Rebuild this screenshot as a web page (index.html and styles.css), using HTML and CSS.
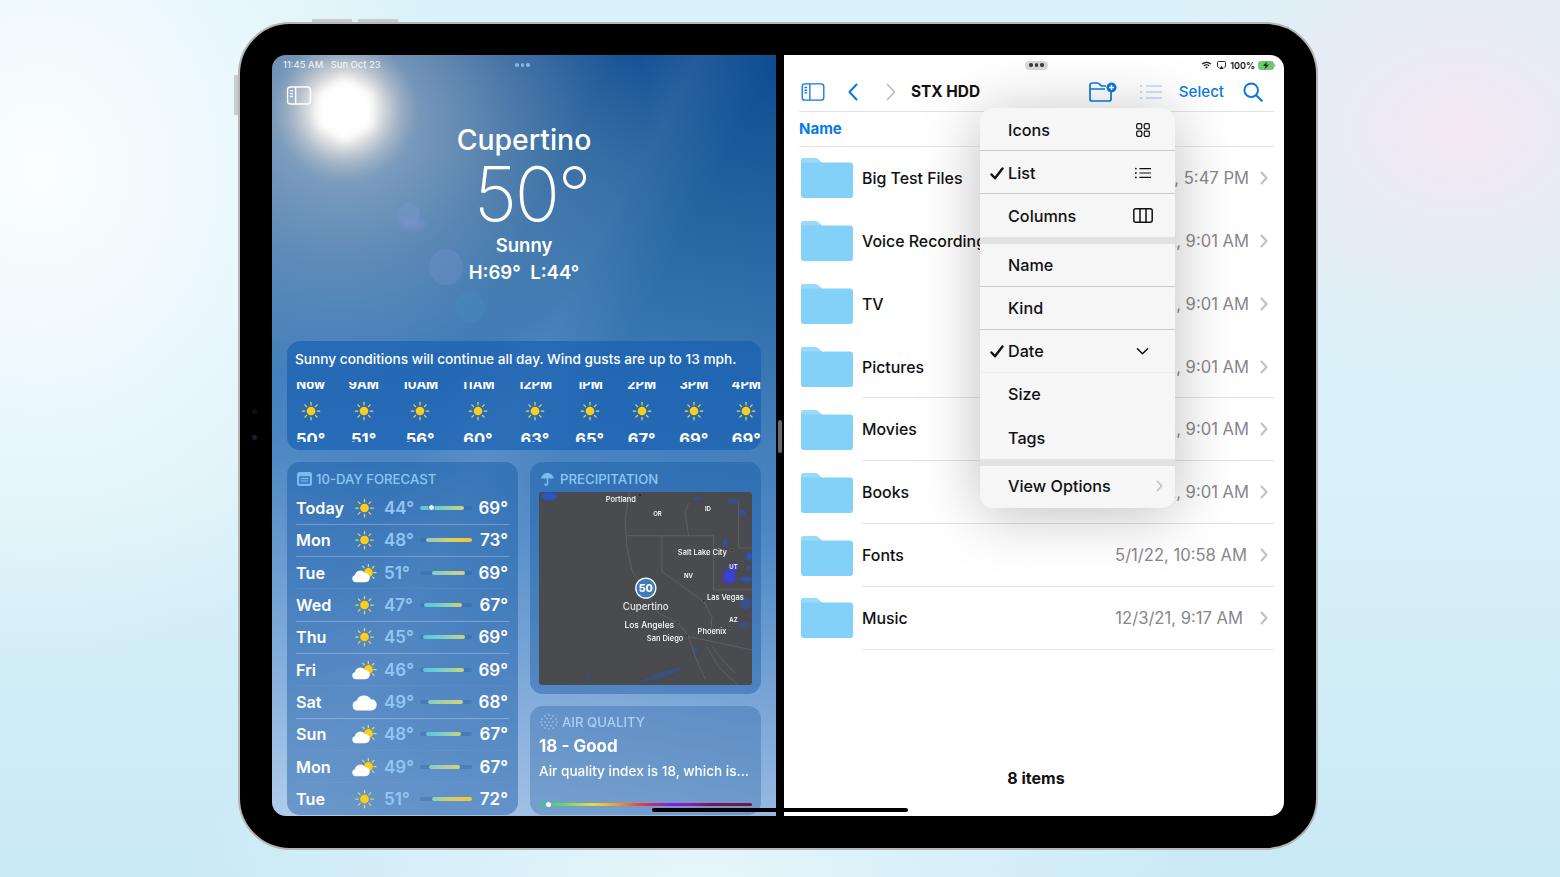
FILE: index.html
```html
<!DOCTYPE html>
<html lang="en">
<head>
<meta charset="utf-8">
<title>Split View</title>
<link rel="stylesheet" href="styles.css">
</head>
<body>
<svg class="defs" aria-hidden="true">
  <symbol id="sun" viewBox="0 0 24 24">
    <g stroke="#e9d84f" stroke-width="1.5" stroke-linecap="round">
      <path d="M12 1.5v3M12 19.5v3M1.5 12h3M19.5 12h3M4.6 4.6l2.1 2.1M17.3 17.3l2.1 2.1M4.6 19.4l2.1-2.1M17.3 6.7l2.1-2.1"/>
    </g>
    <circle cx="12" cy="12" r="5.2" fill="#fdcf16"/>
  </symbol>
  <symbol id="cloudsun" viewBox="0 0 26 20">
    <g stroke="#e9d84f" stroke-width="1.3" stroke-linecap="round">
      <path d="M17 1v2.4M25 9.5h-2.4M11.2 3l1.5 1.7M22.8 3.2l-1.6 1.6M22.8 15.6l-1.6-1.6"/>
    </g>
    <circle cx="17" cy="9.5" r="4.6" fill="#fdcf16"/>
    <path d="M4 19.5a3.7 3.7 0 0 1-.9-7.3A5.7 5.7 0 0 1 13.5 10a4.8 4.8 0 0 1 5 4.9c0 2.700-2 4.600-4.600 4.600z" fill="#fff"/>
  </symbol>
  <symbol id="cloud" viewBox="0 0 22 16">
    <path d="M5 15.500a4.300 4.300 0 0 1-1-8.500A7 7 0 0 1 16.500 5.500 5 5 0 0 1 17 15.500z" fill="#fff"/>
  </symbol>
  <symbol id="folder" viewBox="0 0 52 40">
    <path d="M0 3a3 3 0 0 1 3-3h10c3 0 4 1 6 3l2 1.500h28a3 3 0 0 1 3 3V37a3 3 0 0 1-3 3H3a3 3 0 0 1-3-3z" fill="#83d1f9"/>
    <path d="M0 3a3 3 0 0 1 3-3h10c3 0 4 1 6 3l2 1.500H0z" fill="#9adaf9"/>
  </symbol>
  <symbol id="sidebar" viewBox="0 0 26 20">
    <rect x="1" y="1" width="24" height="18" rx="3" fill="none" stroke="currentColor" stroke-width="1.500"/>
    <path d="M9.500 1v18" stroke="currentColor" stroke-width="1.500"/>
    <path d="M3.500 5h3M3.500 8h3M3.500 11h3" stroke="currentColor" stroke-width="1.500"/>
  </symbol>
  <symbol id="chev" viewBox="0 0 8 14">
    <path d="M1.500 1.500 6.500 7l-5 5.500" fill="none" stroke="currentColor" stroke-width="2" stroke-linecap="round" stroke-linejoin="round"/>
  </symbol>
  <symbol id="check" viewBox="0 0 14 13">
    <path d="M1.500 7.500 5 11.300 12.500 1.500" fill="none" stroke="#111" stroke-width="2.400" stroke-linecap="round" stroke-linejoin="round"/>
  </symbol>
</svg>

<main class="device">
  <span class="hw hw-top-a"></span>
  <span class="hw hw-top-b"></span>
  <span class="hw hw-left"></span>
  <span class="cam cam-a"></span>
  <span class="cam cam-b"></span>

  <div class="screen">
    <section class="weather">
      <span class="flare flare-sun"></span>
      <span class="flare flare-streak"></span>
      <span class="flare flare-a"></span>
      <span class="flare flare-b"></span>
      <span class="flare flare-c"></span>

      <div class="w-status">
        <span>11:45 AM&nbsp;&nbsp;&nbsp;Sun Oct 23</span>
        <span class="w-dots"><i></i><i></i><i></i></span>
      </div>
      <div class="w-toolbar"><svg class="w-side"><use href="#sidebar"/></svg></div>

      <header class="hero">
        <h1 class="city">Cupertino</h1>
        <div class="temp">50°</div>
        <div class="cond">Sunny</div>
        <div class="hilo">H:69°&nbsp;&nbsp;L:44°</div>
      </header>

      <section class="card hourly">
        <p class="summary">Sunny conditions will continue all day. Wind gusts are up to 13 mph.</p>
        <div class="hours">
          <div class="hour"><b>Now</b><svg><use href="#sun"/></svg><b class="ht">50°</b></div>
          <div class="hour"><b>9AM</b><svg><use href="#sun"/></svg><b class="ht">51°</b></div>
          <div class="hour"><b>10AM</b><svg><use href="#sun"/></svg><b class="ht">56°</b></div>
          <div class="hour"><b>11AM</b><svg><use href="#sun"/></svg><b class="ht">60°</b></div>
          <div class="hour"><b>12PM</b><svg><use href="#sun"/></svg><b class="ht">63°</b></div>
          <div class="hour"><b>1PM</b><svg><use href="#sun"/></svg><b class="ht">65°</b></div>
          <div class="hour"><b>2PM</b><svg><use href="#sun"/></svg><b class="ht">67°</b></div>
          <div class="hour"><b>3PM</b><svg><use href="#sun"/></svg><b class="ht">69°</b></div>
          <div class="hour"><b>4PM</b><svg><use href="#sun"/></svg><b class="ht">69°</b></div>
        </div>
      </section>

      <div class="cards">
        <section class="card forecast">
          <h2 class="card-head">
            <svg class="head-ico" viewBox="0 0 15 14"><rect width="15" height="14" rx="2.500" fill="#7db9f0"/><rect x="2" y="4" width="11" height="8" rx="1" fill="#3f83c6"/><path d="M4 6.500h7M4 9h7" stroke="#7db9f0"/></svg>
            10-DAY FORECAST
          </h2>
          <div class="day"><span class="d-name">Today</span><svg class="d-ico"><use href="#sun"/></svg><span class="d-lo">44°</span><span class="track"><i class="fill fill-cool" style="margin-left:0;width:44px"></i><i class="now-dot"></i></span><span class="d-hi">69°</span></div>
          <div class="day"><span class="d-name">Mon</span><svg class="d-ico"><use href="#sun"/></svg><span class="d-lo">48°</span><span class="track"><i class="fill fill-warm" style="margin-left:6px;width:46px"></i></span><span class="d-hi">73°</span></div>
          <div class="day day-faint"><span class="d-name">Tue</span><svg class="d-ico"><use href="#cloudsun"/></svg><span class="d-lo">51°</span><span class="track"><i class="fill fill-mid" style="margin-left:12px;width:33px"></i></span><span class="d-hi">69°</span></div>
          <div class="day"><span class="d-name">Wed</span><svg class="d-ico"><use href="#sun"/></svg><span class="d-lo">47°</span><span class="track"><i class="fill fill-cool" style="margin-left:4px;width:38px"></i></span><span class="d-hi">67°</span></div>
          <div class="day"><span class="d-name">Thu</span><svg class="d-ico"><use href="#sun"/></svg><span class="d-lo">45°</span><span class="track"><i class="fill fill-cool" style="margin-left:3px;width:42px"></i></span><span class="d-hi">69°</span></div>
          <div class="day day-faint"><span class="d-name">Fri</span><svg class="d-ico"><use href="#cloudsun"/></svg><span class="d-lo">46°</span><span class="track"><i class="fill fill-cool" style="margin-left:3px;width:41px"></i></span><span class="d-hi">69°</span></div>
          <div class="day"><span class="d-name">Sat</span><svg class="d-ico"><use href="#cloud"/></svg><span class="d-lo">49°</span><span class="track"><i class="fill fill-mid" style="margin-left:8px;width:35px"></i></span><span class="d-hi">68°</span></div>
          <div class="day day-faint"><span class="d-name">Sun</span><svg class="d-ico"><use href="#cloudsun"/></svg><span class="d-lo">48°</span><span class="track"><i class="fill fill-cool" style="margin-left:6px;width:35px"></i></span><span class="d-hi">67°</span></div>
          <div class="day day-faint"><span class="d-name">Mon</span><svg class="d-ico"><use href="#cloudsun"/></svg><span class="d-lo">49°</span><span class="track"><i class="fill fill-mid" style="margin-left:9px;width:31px"></i></span><span class="d-hi">67°</span></div>
          <div class="day"><span class="d-name">Tue</span><svg class="d-ico"><use href="#sun"/></svg><span class="d-lo">51°</span><span class="track"><i class="fill fill-warm" style="margin-left:12px;width:40px"></i></span><span class="d-hi">72°</span></div>
        </section>

        <div class="side-cards">
          <section class="card precip">
            <h2 class="card-head">
              <svg class="head-ico" viewBox="0 0 15 16"><path d="M7.500 1C3.500 1 .8 3.800.3 8c1.300-1 2.400-1 3.500 0 1.100-1 2.400-1 3.700 0 1.300-1 2.600-1 3.700 0 1.100-1 2.200-1 3.500 0C14.200 3.800 11.500 1 7.500 1z" fill="#7db9f0"/><path d="M7.500 7v6.500c0 2-2.500 2-2.800.3" fill="none" stroke="#7db9f0" stroke-width="1.800" stroke-linecap="round"/></svg>
              PRECIPITATION
            </h2>
            <svg class="map" viewBox="42 97 638 578">
              <defs><filter id="soft"><feGaussianBlur stdDeviation="3"/></filter></defs>
              <rect x="42" y="97" width="638" height="578" fill="#4a4b4e"/>
              <g fill="#2a55cc" filter="url(#soft)">
                <ellipse cx="72" cy="110" rx="24" ry="12"/>
                <ellipse cx="612" cy="350" rx="20" ry="22" fill="#3c3fd0"/>
                <ellipse cx="625" cy="322" rx="10" ry="12" fill="#3c3fd0"/>
                <ellipse cx="600" cy="250" rx="6" ry="12" opacity=".7"/>
                <ellipse cx="672" cy="290" rx="9" ry="11"/>
                <ellipse cx="662" cy="358" rx="18" ry="7"/>
                <ellipse cx="670" cy="325" rx="8" ry="7" opacity=".7"/>
                <ellipse cx="660" cy="430" rx="18" ry="20" opacity=".45"/>
                <ellipse cx="655" cy="495" rx="20" ry="10" opacity=".35"/>
                <ellipse cx="625" cy="125" rx="22" ry="8" opacity=".4"/>
                <ellipse cx="650" cy="160" rx="14" ry="10" opacity=".45"/>
                <ellipse cx="515" cy="115" rx="12" ry="6" opacity=".4"/>
                <ellipse cx="410" cy="645" rx="65" ry="6" opacity=".5" transform="rotate(-18 410 645)"/>
                <ellipse cx="190" cy="652" rx="7" ry="5" opacity=".4"/>
                <ellipse cx="510" cy="572" rx="8" ry="12" opacity=".4"/>
              </g>
              <g class="map-lines">
                <path d="M312 97 300 180l5 80 15 70 30 50 50 80 60 30 30 40 20 60 30 68"/>
                <path d="M305 228H565M410 228V335L535 425l25 45-5 60M565 228V390H680M490 130l-10 30 10 68M640 130V265H680M490 530 680 570"/>
                <path d="M545 560l35 60 30 30 30 25M560 560l40 50 30 30"/>
              </g>
              <g class="map-label">
                <text x="242" y="126">Portland</text>
                <text x="384" y="170" class="tiny">OR</text>
                <text x="539" y="154" class="tiny">ID</text>
                <text x="458" y="287">Salt Lake City</text>
                <text x="612" y="327" class="tiny">UT</text>
                <text x="476" y="354" class="tiny">NV</text>
                <text x="545" y="419">Las Vegas</text>
                <text x="612" y="486" class="tiny">AZ</text>
                <text x="517" y="521">Phoenix</text>
                <text x="293" y="451" class="big">Cupertino</text>
                <text x="298" y="505" class="mid">Los Angeles</text>
                <text x="365" y="544">San Diego</text>
              </g>
              <circle cx="345" cy="106" r="3" fill="#222"/>
              <circle cx="458" cy="487" r="4" fill="#222" stroke="#aaa"/>
              <circle cx="486" cy="527" r="4" fill="#222" stroke="#aaa"/>
              <circle cx="536" cy="423" r="4" fill="#222" stroke="#aaa"/>
              <circle cx="614" cy="505" r="4" fill="#222" stroke="#aaa"/>
              <circle cx="620" cy="272" r="4" fill="#222" stroke="#aaa"/>
              <circle cx="362" cy="385" r="30" fill="#3f7cb8" stroke="#fff" stroke-width="4"/>
              <text x="362" y="397" class="pin">50</text>
            </svg>
          </section>

          <section class="card air">
            <h2 class="card-head air-head">
              <svg class="head-ico air-ico" viewBox="0 0 18 16"><g fill="#a9cff2"><circle cx="9" cy="1" r=".8"/><circle cx="5" cy="2" r=".8"/><circle cx="13" cy="2" r=".8"/><circle cx="2" cy="5" r=".8"/><circle cx="7" cy="4.500" r=".8"/><circle cx="11" cy="4.500" r=".8"/><circle cx="16" cy="5" r=".8"/><circle cx="1" cy="8" r=".8"/><circle cx="5" cy="8" r=".8"/><circle cx="9" cy="8" r=".8"/><circle cx="13" cy="8" r=".8"/><circle cx="17" cy="8" r=".8"/><circle cx="2" cy="11" r=".8"/><circle cx="7" cy="11.500" r=".8"/><circle cx="11" cy="11.500" r=".8"/><circle cx="16" cy="11" r=".8"/><circle cx="5" cy="14" r=".8"/><circle cx="9" cy="15" r=".8"/><circle cx="13" cy="14" r=".8"/></g></svg>
              AIR QUALITY
            </h2>
            <div class="air-val">18 - Good</div>
            <p class="air-desc">Air quality index is 18, which is...</p>
            <div class="air-bar"><i></i></div>
          </section>
        </div>
      </div>
    </section>

    <div class="divider"><span class="handle"></span></div>

    <section class="files">
      <div class="f-status">
        <span class="f-dots"><i></i><i></i><i></i></span>
        <span class="f-indicators">
          <svg class="wifi" viewBox="0 0 12 9"><path d="M.5 3a8 8 0 0 1 11 0L10.500 4a6.500 6.500 0 0 0-9 0zM2.500 5a5 5 0 0 1 7 0l-1 1a3.500 3.500 0 0 0-5 0zM4.500 7a2 2 0 0 1 3 0L6 8.700z" fill="#111"/></svg>
          <svg class="cast" viewBox="0 0 10 9"><path d="M2.500 7H1.500a1 1 0 0 1-1-1V1.500a1 1 0 0 1 1-1h7a1 1 0 0 1 1 1V6a1 1 0 0 1-1 1h-1" fill="none" stroke="#111"/><path d="M5 5.500 7.500 9h-5z" fill="#111"/></svg>
          <span class="pct">100%</span>
          <svg class="batt" viewBox="0 0 18 9"><rect x=".5" y=".5" width="15" height="8" rx="2" fill="#5ed35f" stroke="#8a8a8a" stroke-width=".6"/><path d="M16.500 3v3c.6 0 1-.6 1-1.500s-.4-1.500-1-1.500z" fill="#888"/><path d="M9.500 0 4.500 5h3L6 9l5.500-5.500h-3z" fill="#111" stroke="#5ed35f" stroke-width=".5"/></svg>
        </span>
      </div>

      <nav class="f-toolbar">
        <svg class="t-side"><use href="#sidebar"/></svg>
        <svg class="t-back" viewBox="0 0 10 18"><path d="M8.500 1.500 1.500 9l7 7.500" fill="none" stroke="currentColor" stroke-width="2" stroke-linecap="round" stroke-linejoin="round"/></svg>
        <svg class="t-fwd" viewBox="0 0 10 18"><path d="M1.500 1.500 8.500 9l-7 7.500" fill="none" stroke="currentColor" stroke-width="1.800" stroke-linecap="round" stroke-linejoin="round"/></svg>
        <strong class="t-title">STX HDD</strong>
        <svg class="t-new" viewBox="0 0 28 20"><path d="M1 5.500V3a2 2 0 0 1 2-2h5c1.500 0 2 .6 3 1.600L12.500 4H17M1 5.500V17a2 2 0 0 0 2 2h17a2 2 0 0 0 2-2V10M1 7h15" fill="none" stroke="#0a7ae0" stroke-width="1.700"/><circle cx="22.500" cy="5.500" r="5" fill="#0a7ae0"/><path d="M22.500 3v5M20 5.500h5" stroke="#fff" stroke-width="1.400"/></svg>
        <svg class="t-list" viewBox="0 0 22 16"><g fill="#c3d9ef"><circle cx="1.200" cy="2" r="1.200"/><circle cx="1.200" cy="8" r="1.200"/><circle cx="1.200" cy="14" r="1.200"/></g><path d="M6 2h16M6 8h16M6 14h16" stroke="#c3d9ef" stroke-width="1.500"/></svg>
        <span class="t-select">Select</span>
        <svg class="t-search" viewBox="0 0 20 20"><circle cx="8.200" cy="8.200" r="6.800" fill="none" stroke="#0a7ae0" stroke-width="2"/><path d="m13.200 13.200 5.500 5.500" stroke="#0a7ae0" stroke-width="2.200" stroke-linecap="round"/></svg>
      </nav>

      <div class="f-colhead">Name</div>

      <div class="f-list">
        <div class="f-row f-row-plain"><svg class="fold"><use href="#folder"/></svg><div class="f-body"><span class="f-name">Big Test Files</span><span class="f-date">10/22/22, 5:47 PM</span><svg class="f-chev"><use href="#chev"/></svg></div></div>
        <div class="f-row f-row-plain"><svg class="fold"><use href="#folder"/></svg><div class="f-body"><span class="f-name">Voice Recordings</span><span class="f-date">10/22/22, 9:01 AM</span><svg class="f-chev"><use href="#chev"/></svg></div></div>
        <div class="f-row f-row-plain"><svg class="fold"><use href="#folder"/></svg><div class="f-body"><span class="f-name">TV</span><span class="f-date">10/22/22, 9:01 AM</span><svg class="f-chev"><use href="#chev"/></svg></div></div>
        <div class="f-row"><svg class="fold"><use href="#folder"/></svg><div class="f-body"><span class="f-name">Pictures</span><span class="f-date">10/22/22, 9:01 AM</span><svg class="f-chev"><use href="#chev"/></svg></div></div>
        <div class="f-row"><svg class="fold"><use href="#folder"/></svg><div class="f-body"><span class="f-name">Movies</span><span class="f-date">10/22/22, 9:01 AM</span><svg class="f-chev"><use href="#chev"/></svg></div></div>
        <div class="f-row"><svg class="fold"><use href="#folder"/></svg><div class="f-body"><span class="f-name">Books</span><span class="f-date">10/22/22, 9:01 AM</span><svg class="f-chev"><use href="#chev"/></svg></div></div>
        <div class="f-row"><svg class="fold"><use href="#folder"/></svg><div class="f-body"><span class="f-name">Fonts</span><span class="f-date f-date-b">5/1/22, 10:58 AM</span><svg class="f-chev"><use href="#chev"/></svg></div></div>
        <div class="f-row"><svg class="fold"><use href="#folder"/></svg><div class="f-body"><span class="f-name">Music</span><span class="f-date f-date-c">12/3/21, 9:17 AM</span><svg class="f-chev"><use href="#chev"/></svg></div></div>
      </div>

      <footer class="f-foot">8 items</footer>

      <div class="menu">
        <div class="m-item m-low"><span class="m-check"></span><span class="m-label">Icons</span>
          <svg class="m-ico" viewBox="0 0 16 16"><g fill="none" stroke="#111" stroke-width="1.400"><rect x=".8" y=".8" width="5.800" height="5.800" rx="1.500"/><rect x="9.400" y=".8" width="5.800" height="5.800" rx="1.500"/><rect x=".8" y="9.400" width="5.800" height="5.800" rx="1.500"/><rect x="9.400" y="9.400" width="5.800" height="5.800" rx="1.500"/></g></svg></div>
        <div class="m-item m-low"><span class="m-check"><svg><use href="#check"/></svg></span><span class="m-label">List</span>
          <svg class="m-ico" viewBox="0 0 18 14"><g fill="#111"><circle cx="1" cy="2" r="1"/><circle cx="1" cy="7" r="1"/><circle cx="1" cy="12" r="1"/></g><path d="M5 2h13M5 7h13M5 12h13" stroke="#111" stroke-width="1.400"/></svg></div>
        <div class="m-item m-end"><span class="m-check"></span><span class="m-label">Columns</span>
          <svg class="m-ico m-ico-wide" viewBox="0 0 20 15"><rect x=".8" y=".8" width="18.400" height="13.400" rx="2" fill="none" stroke="#111" stroke-width="1.500"/><path d="M7 1v13M13 1v13" stroke="#111" stroke-width="1.500"/></svg></div>
        <div class="m-gap"></div>
        <div class="m-item"><span class="m-check"></span><span class="m-label">Name</span></div>
        <div class="m-item"><span class="m-check"></span><span class="m-label">Kind</span></div>
        <div class="m-item m-soft"><span class="m-check"><svg><use href="#check"/></svg></span><span class="m-label">Date</span>
          <svg class="m-ico m-ico-chev" viewBox="0 0 14 9"><path d="M1.500 1.500 7 7l5.500-5.500" fill="none" stroke="#111" stroke-width="1.600" stroke-linecap="round" stroke-linejoin="round"/></svg></div>
        <div class="m-item m-end m-high"><span class="m-check"></span><span class="m-label">Size</span></div>
        <div class="m-item m-end"><span class="m-check"></span><span class="m-label">Tags</span></div>
        <div class="m-gap"></div>
        <div class="m-item m-end m-higher"><span class="m-check"></span><span class="m-label">View Options</span>
          <svg class="m-more"><use href="#chev"/></svg></div>
      </div>
    </section>

    <span class="home"></span>
  </div>
</main>
</body>
</html>
```

FILE: styles.css
```css
* { box-sizing: border-box; }
html, body { margin: 0; height: 100%; }
body {
  width: 1560px;
  height: 877px;
  overflow: hidden;
  padding: 22px 0 0 238px;
  font-family: Inter, "Noto Sans", "Liberation Sans", sans-serif;
  background:
    radial-gradient(340px 260px at 1460px 130px, rgba(245,232,242,.95), rgba(245,232,242,0)),
    radial-gradient(420px 500px at 40px 170px, #fbfeff, rgba(251,254,255,0)),
    radial-gradient(520px 200px at 700px 880px, #e6f6fb, rgba(230,246,251,0)),
    linear-gradient(180deg, #d9f2f9 0%, #d9f1f8 55%, #c9e9f5 100%);
}
.defs { display: none; }
h1, h2, p { margin: 0; font: inherit; }

/* device */
.device {
  position: relative;
  width: 1080px;
  height: 828px;
  padding: 31px 32px 32px;
  background: #000;
  border: 2px solid #b3b5b7;
  border-radius: 52px;
}
.hw { position: absolute; background: #c9cbcd; }
.hw-top-a { left: 72px; top: -5px; width: 40px; height: 3px; }
.hw-top-b { left: 118px; top: -5px; width: 40px; height: 3px; }
.hw-left { left: -6px; top: 51px; width: 4px; height: 40px; }
.cam { position: absolute; left: 12px; width: 5px; height: 5px; border-radius: 50%; background: #0d0f1c; }
.cam-a { top: 385px; }
.cam-b { top: 411px; background: #14203d; }

.screen {
  position: relative;
  display: flex;
  width: 1012px;
  height: 761px;
  border-radius: 14px;
  overflow: hidden;
  background: #000;
}

/* weather */
.weather {
  position: relative;
  width: 504px;
  flex: none;
  display: flex;
  flex-direction: column;
  padding: 0 15px;
  color: #fff;
  overflow: hidden;
  background:
    radial-gradient(300px 270px at 73px 55px, rgba(225,222,222,.62), rgba(205,205,210,.28) 55%, rgba(205,205,210,0)),
    linear-gradient(118deg, rgba(255,255,255,0) 38%, rgba(255,255,255,.08) 47%, rgba(255,255,255,0) 56%),
    linear-gradient(190deg, #0d4b91 0%, #23629f 18%, #3a78b4 38%, #4c87c4 56%, #6f9fd3 72%, #8eb4df 86%, #acc9e9 100%);
}
.flare { position: absolute; border-radius: 50%; }
.flare-sun {
  left: 3px; top: -15px; width: 140px; height: 140px;
  background: radial-gradient(circle, rgba(255,250,245,.95) 0, rgba(255,245,235,.78) 34%, rgba(255,238,222,.3) 52%, rgba(255,235,215,0) 72%);
  filter: blur(5px);
}
.flare-sun::before {
  content: "";
  position: absolute;
  inset: 36px;
  background: #fff;
  clip-path: polygon(50% 0, 93% 25%, 93% 75%, 50% 100%, 7% 75%, 7% 25%);
}
.flare-streak { left: 128px; top: 164px; width: 26px; height: 10px; background: rgba(140,150,225,.45); filter: blur(3px); }
.flare-a { left: 126px; top: 148px; width: 22px; height: 22px; background: rgba(125,150,210,.4); }
.flare-b { left: 157px; top: 194px; width: 34px; height: 36px; background: rgba(125,150,215,.28); }
.flare-c { left: 183px; top: 236px; width: 30px; height: 32px; background: rgba(70,140,190,.4); }

.w-status { position: relative; display: flex; height: 20px; padding-bottom: 1px; align-items: center; font-size: 9.400px; font-weight: 500; color: rgba(255,255,255,.82); margin-left: -4px; }
.w-dots { position: absolute; left: 232px; top: 8px; display: flex; gap: 2px; }
.w-dots i { width: 3.500px; height: 3.500px; border-radius: 50%; background: #7fb4e8; }
.w-toolbar { position: relative; height: 19px; margin: 11px 0 0 -1px; }
.w-side { display: block; width: 26px; height: 19px; color: #fff; }

.hero { position: relative; display: flex; flex-direction: column; align-items: center; height: 236px; }
.city { margin-top: 17px; font-size: 28.400px; line-height: 36px; font-weight: 500; }
.temp { font-size: 75px; line-height: 71px; font-weight: 200; letter-spacing: -2.500px; margin-left: 15px; }
.cond { margin-top: 3px; font-size: 18.500px; line-height: 26px; font-weight: 600; }
.hilo { margin-top: 1px; font-size: 18.600px; line-height: 26px; font-weight: 600; }

.card { position: relative; border-radius: 13px; background: rgba(22,88,165,.5); }
.hourly { height: 109px; flex: none; padding: 9px 0 0 8px; background: rgba(20,92,178,.62); }
.summary { font-size: 13.700px; line-height: 18px; font-weight: 500; white-space: nowrap; }
.hours {
  display: flex;
  justify-content: space-between;
  height: 60px;
  margin-top: 13.500px;
  overflow: hidden;
  padding-left: 1px;
}
.hour { display: flex; flex-direction: column; align-items: center; flex: none; font-size: 13px; }
.hour b { font-weight: 700; line-height: 16px; margin-top: -5.500px; }
.hour svg { width: 20px; height: 20px; margin: 9px 0 8.500px; flex: none; }
.hour .ht { font-size: 16.500px; margin-top: 0; line-height: 18px; }

.cards { position: relative; display: grid; grid-template-columns: 231px 231px; gap: 12px; margin-top: 12px; height: 353px; flex: none; }
.card-head { display: flex; align-items: center; gap: 4px; font-size: 13.200px; font-weight: 500; color: #8ec6f6; line-height: 16px; }
.head-ico { width: 15px; height: 14px; flex: none; }

.forecast { padding: 9px 9px 0; background: rgba(22,88,165,.45); overflow: hidden; }
.forecast .card-head { padding-left: 1px; margin-bottom: 5.200px; }
.day { display: flex; align-items: center; height: 32.350px; border-bottom: 1px solid rgba(255,255,255,.28); font-size: 17px; font-weight: 600; }
.day:last-child { border-bottom: 0; }
.day-faint { border-bottom-color: rgba(255,255,255,.04); }
.d-name { width: 56px; flex: none; font-size: 16.200px; }
.d-ico { width: 25px; height: 20px; flex: none; }
.d-lo { width: 36px; flex: none; margin-left: 7px; color: #93c6f3; }
.track { position: relative; display: flex; align-items: center; width: 52px; height: 4px; flex: none; border-radius: 2px; background: rgba(40,90,150,.3); }
.fill { display: block; height: 4px; border-radius: 2px; }
.fill-cool { background: linear-gradient(90deg, #56c8da, #86d0c0 55%, #d3d174); }
.fill-mid { background: linear-gradient(90deg, #86cdc4, #d4d27a); }
.fill-warm { background: linear-gradient(90deg, #8bd0c4, #e2cc5a 55%, #f2c53a); }
.now-dot { position: absolute; left: 9px; top: -.5px; width: 5px; height: 5px; border-radius: 50%; background: #fff; outline: 1.500px solid #4083c4; }
.d-hi { flex: 1; text-align: right; padding-right: 1px; }

.side-cards { display: flex; flex-direction: column; gap: 12px; }
.precip { height: 232px; flex: none; padding: 9px 9px 0; background: rgba(22,88,165,.42); }
.precip .card-head { gap: 5px; margin-bottom: 5px; padding-left: 1px; }
.map { display: block; width: 213px; height: 193px; border-radius: 3px; }
.map-lines path { fill: none; stroke: #68696e; stroke-width: 2; }
.map-label text { fill: #fff; font-size: 22.500px; font-weight: 500; }
.map-label .tiny { font-size: 18px; font-weight: 600; }
.map-label .big { font-size: 29px; fill: #e4e4e6; }
.map-label .mid { font-size: 25.400px; }
.map .pin { fill: #fff; font-size: 32px; font-weight: 800; text-anchor: middle; }

.air { flex: 1; padding: 8px 9px 0; background: rgba(30,90,160,.32); }
.air-head { gap: 4px; color: #a9d0f2; }
.air-ico { width: 18px; height: 16px; margin-left: 1px; }
.air-val { margin-top: 5px; font-size: 17px; line-height: 22px; font-weight: 700; }
.air-desc { margin-top: 5px; font-size: 13.600px; line-height: 18px; font-weight: 500; white-space: nowrap; }
.air-bar { position: relative; margin-top: 23px; height: 3px; border-radius: 2px; background: linear-gradient(90deg, #2fcf7f 0%, #5fd46f 10%, #e9dd44 25%, #f09a2c 37%, #e0304f 50%, #8a1fd8 62%, #8a1fb0 70%, #7a1a55 80%, #6d1a3d 100%); }
.air-bar i { position: absolute; left: 7px; top: -1px; width: 5px; height: 5px; border-radius: 50%; background: #fff; }

.divider { position: relative; width: 8px; flex: none; background: #000; }
.handle { position: absolute; left: 2px; top: 365px; width: 4px; height: 33px; border-radius: 2px; background: #66686b; }

/* files */
.files { position: relative; flex: 1; display: flex; flex-direction: column; background: #fff; color: #111; }
.f-status { display: flex; align-items: center; height: 20px; padding: 0 8px 0 241px; }
.f-dots { display: flex; justify-content: center; align-items: center; gap: 2px; width: 23px; height: 9px; border-radius: 5px; background: #d7d8da; }
.f-dots i { width: 3.500px; height: 3.500px; border-radius: 50%; background: #3a3b3d; }
.f-indicators { display: flex; align-items: center; gap: 3px; margin-left: auto; }
.wifi { width: 11px; height: 8px; }
.cast { width: 9px; height: 8px; margin-left: 2px; }
.pct { font-size: 9px; font-weight: 600; margin-left: 1px; }
.batt { width: 18px; height: 9px; }

.f-toolbar {
  display: flex;
  align-items: center;
  height: 37px;
  margin: 0 10px 0 15px;
  padding: 0 0 3px 2px;
  border-bottom: 1px solid #e3e3e5;
}
.t-side { width: 24px; height: 18px; color: #0a7ae0; flex: none; }
.t-back { width: 10px; height: 18px; margin-left: 23px; color: #0a7ae0; flex: none; }
.t-fwd { width: 10px; height: 18px; margin-left: 28px; color: #bfc0c3; flex: none; }
.t-title { margin-left: 15px; font-size: 15.400px; font-weight: 700; white-space: nowrap; }
.t-new { width: 28px; height: 20px; margin-left: auto; flex: none; }
.t-list { width: 22px; height: 16px; margin-left: 23px; flex: none; }
.t-select { margin-left: 17px; font-size: 15.100px; font-weight: 500; color: #0a7ae0; }
.t-search { width: 20px; height: 20px; margin: 0 11px 0 19px; flex: none; }

.f-colhead {
  display: flex;
  align-items: center;
  height: 35px;
  margin: 0 10px 0 15px;
  padding-bottom: 2px;
  border-bottom: 1px solid #e7e7e9;
  font-size: 15px;
  font-weight: 700;
  color: #0a7ae0;
}
.f-list { flex: 1; padding-left: 17px; }
.f-row { display: flex; align-items: center; gap: 9px; height: 62.860px; }
.fold { width: 52px; height: 40px; flex: none; }
.f-body { flex: 1; display: flex; align-items: center; height: 100%; margin-right: 10px; border-bottom: 1px solid #e3e3e5; }
.f-row-plain .f-body { border-bottom-color: transparent; }
.f-name { margin-top: 1px; font-size: 15.900px; font-weight: 500; white-space: nowrap; }
.f-date { margin-left: auto; font-size: 16.600px; color: #87878b; white-space: nowrap; }
.f-date-b { margin-right: 2px; }
.f-date-c { margin-right: 6px; }
.f-chev { width: 8px; height: 14px; margin: 0 6px 0 11px; flex: none; color: #c0c0c4; }
.f-foot { height: 76px; flex: none; display: flex; align-items: center; justify-content: center; font-size: 16px; font-weight: 700; padding-left: 4px; }

/* menu */
.menu {
  position: absolute;
  left: 196px;
  top: 53px;
  width: 195px;
  height: 400px;
  display: flex;
  flex-direction: column;
  border-radius: 13px;
  overflow: hidden;
  background: #f6f6f7;
  box-shadow: 0 6px 60px rgba(0,0,0,.26);
}
.m-item { flex: none; display: flex; align-items: center; height: 43px; border-bottom: 1px solid #c9c9cb; padding-right: 21px; font-size: 16.200px; font-weight: 500; color: #111; }
.m-low { padding-top: 2px; }
.m-end { border-bottom: 0; }
.m-soft { border-bottom-color: #eeeeef; }
.m-high { padding-bottom: 2px; }
.m-higher { padding-bottom: 4px; }
.m-check { display: flex; align-items: center; width: 28px; height: 13px; flex: none; padding-left: 10px; }
.m-check svg { width: 14px; height: 13px; }
.m-label { flex: 1; white-space: nowrap; }
.m-ico { width: 16px; height: 14px; margin-right: 3px; flex: none; }
.m-ico-wide { width: 20px; height: 15px; margin-right: 1px; }
.m-ico-chev { width: 13px; height: 9px; margin-right: 5px; }
.m-more { width: 7px; height: 12px; margin-right: -9px; color: #c4c4c8; flex: none; }
.m-gap { height: 7px; flex: none; background: #e2e2e4; }

.home { position: absolute; left: 380px; top: 753px; width: 256px; height: 4px; border-radius: 2px; background: #000; }
```
